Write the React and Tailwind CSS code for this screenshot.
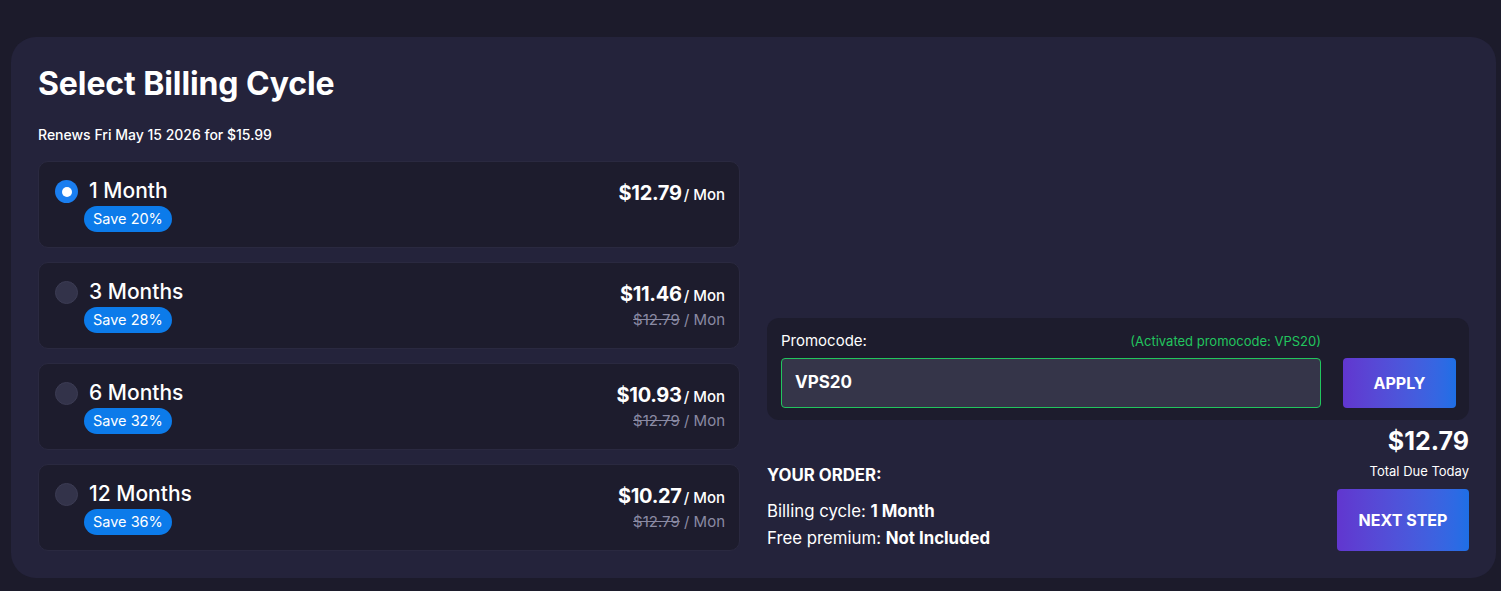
const plans = [
  { name: "1 Month", save: "Save 20%", price: "$12.79", old: null, checked: true },
  { name: "3 Months", save: "Save 28%", price: "$11.46", old: "$12.79" },
  { name: "6 Months", save: "Save 32%", price: "$10.93", old: "$12.79" },
  { name: "12 Months", save: "Save 36%", price: "$10.27", old: "$12.79" },
];

function PlanCard({ plan }) {
  return (
    <div className="h-[87px] rounded-[10px] border border-[#2a2940] bg-[#1d1c2d] pl-[16px] pr-[14px] pt-[16px] flex justify-between">
      <div className="flex gap-[11px]">
        {plan.checked ? (
          <div className="mt-[2px] w-[23px] h-[23px] rounded-full bg-[#1a7ef0] flex items-center justify-center">
            <div className="w-[10px] h-[10px] rounded-full bg-white" />
          </div>
        ) : (
          <div className="mt-[2px] w-[23px] h-[23px] rounded-full bg-[#33334a] border border-[#3c3c54]" />
        )}
        <div className="flex flex-col items-start">
          <div className="text-[21px] leading-[26px] font-medium text-white">{plan.name}</div>
          <div className="mt-[2px] ml-[-5px] h-[26px] px-[9px] rounded-full bg-[#0c7bea] text-white text-[14.5px] leading-[26px]">
            {plan.save}
          </div>
        </div>
      </div>
      <div className="flex flex-col items-end">
        <div className="flex items-baseline text-white leading-[30px]">
          <span className="text-[20px] font-bold tracking-[-0.3px]">{plan.price}</span>
          <span className="text-[15px] font-medium ml-[2px]">/ Mon</span>
        </div>
        {plan.old && (
          <div className="text-[15px] leading-[20px] text-[#8a8aa3] mt-[-1px]">
            <span className="line-through">{plan.old}</span> / Mon
          </div>
        )}
      </div>
    </div>
  );
}

export default function App() {
  return (
    <div
      className="min-h-[591px] bg-[#1c1b2b] pt-[37px] pl-[11px] pr-[5px] pb-[13px] text-white"
      style={{ fontFamily: "Inter, 'Noto Sans', sans-serif" }}
    >
      <div className="rounded-[25px] bg-[#24233b] px-[27px] pt-[28px] pb-[27px] grid grid-cols-2 gap-[27px]">
        <div>
          <h1 className="text-[32px] leading-[38px] font-bold tracking-[-0.1px]">Select Billing Cycle</h1>
          <p className="mt-[23px] text-[14px] leading-[18px] font-medium">Renews Fri May 15 2026 for $15.99</p>
          <div className="mt-[17px] flex flex-col gap-[14px]">
            {plans.map((p) => (
              <PlanCard key={p.name} plan={p} />
            ))}
          </div>
        </div>

        <div className="flex flex-col justify-end">
          <div className="rounded-[12px] bg-[#1d1c2d] pl-[14px] pr-[13px] pt-[14px] pb-[12px]">
            <div className="flex justify-between items-end pr-[135px]">
              <span className="text-[15px] leading-[18px]">Promocode:</span>
              <span className="text-[13px] leading-[18px] text-[#22c55e]">(Activated promocode: VPS20)</span>
            </div>
            <div className="mt-[8px] flex gap-[22px]">
              <div className="flex-1 h-[50px] rounded-[4px] bg-[#353549] border border-[#22c55e] px-[13px] flex items-center text-[17px] font-bold">
                VPS20
              </div>
              <button className="w-[113px] h-[50px] rounded-[4px] bg-gradient-to-r from-[#6136cf] to-[#1d6fe6] text-[16px] font-bold">
                APPLY
              </button>
            </div>
          </div>

          <div className="mt-[5px] flex justify-between items-end">
            <div className="pb-[3px]">
              <div className="text-[16.8px] leading-[20px] font-bold">YOUR ORDER:</div>
              <div className="mt-[16px] text-[16.8px] leading-[20px]">
                Billing cycle: <span className="font-bold">1 Month</span>
              </div>
              <div className="mt-[7px] text-[16.8px] leading-[20px]">
                Free premium: <span className="font-bold">Not Included</span>
              </div>
            </div>
            <div className="flex flex-col items-end">
              <div className="text-[25px] leading-[32px] font-bold">$12.79</div>
              <div className="text-[13px] leading-[18px] mt-[5px]">Total Due Today</div>
              <button className="mt-[9px] w-[132px] h-[62px] rounded-[4px] bg-gradient-to-r from-[#6136cf] to-[#1d6fe6] text-[16px] font-bold">
                NEXT STEP
              </button>
            </div>
          </div>
        </div>
      </div>
    </div>
  );
}
